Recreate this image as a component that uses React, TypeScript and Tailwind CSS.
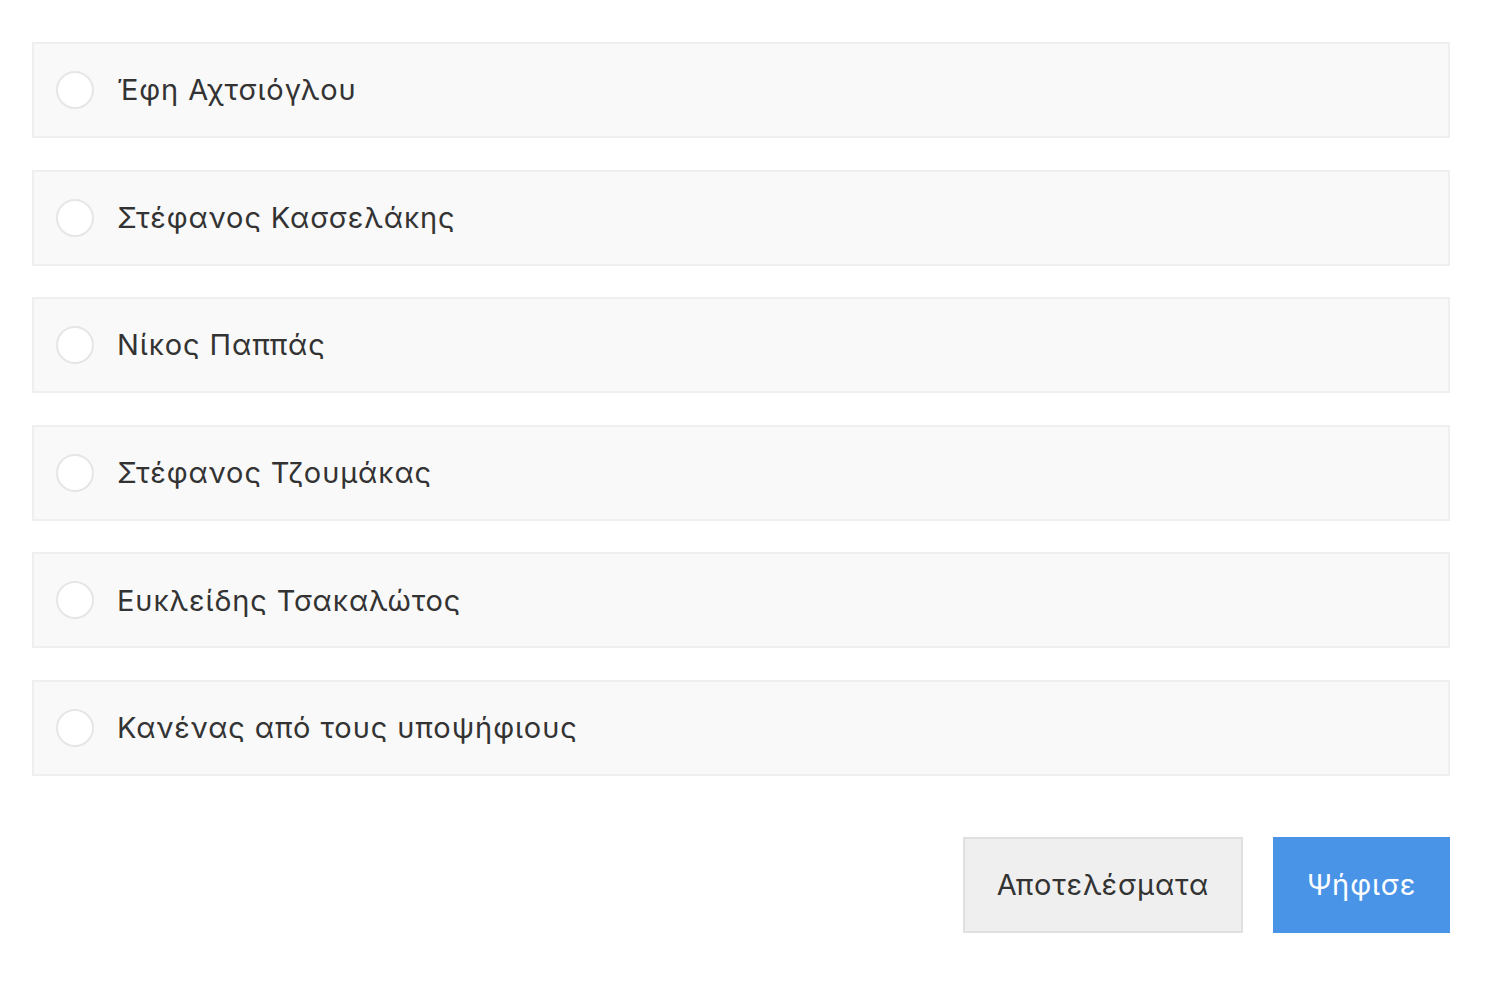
import { useState } from "react";

const candidates = [
  "Έφη Αχτσιόγλου",
  "Στέφανος Κασσελάκης",
  "Νίκος Παππάς",
  "Στέφανος Τζουμάκας",
  "Ευκλείδης Τσακαλώτος",
  "Κανένας από τους υποψήφιους",
];

export default function App() {
  const [selected, setSelected] = useState<number | null>(null);

  return (
    <div className="min-h-screen bg-white font-['Inter',sans-serif] text-[#333]">
      <div className="ml-[32px] w-[1418px] pt-[42px]">
        <div className="flex flex-col gap-[31.6px]">
          {candidates.map((name, i) => (
            <label
              key={name}
              className="flex h-[96px] cursor-pointer items-center border-2 border-[#efefef] bg-[#f9f9f9] pl-[22px]"
              onClick={() => setSelected(i)}
            >
              <span className="flex h-[38px] w-[38px] items-center justify-center rounded-full border-2 border-[#e6e6e6] bg-white">
                {selected === i && <span className="h-[16px] w-[16px] rounded-full bg-[#4a94e8]" />}
              </span>
              <span className="ml-[23px] text-[29px] tracking-[0.9px]">{name}</span>
            </label>
          ))}
        </div>
        <div className="mt-[61px] flex justify-end gap-[30px]">
          <button
            type="button"
            className="h-[96px] w-[280px] border-2 border-[#e0e0e0] bg-[#efefef] text-[29px] tracking-[0.9px] text-[#333]"
          >
            Αποτελέσματα
          </button>
          <button
            type="button"
            className="h-[96px] w-[177px] border-2 border-[#4a94e8] bg-[#4a94e8] text-[29px] tracking-[0.9px] text-white"
          >
            Ψήφισε
          </button>
        </div>
      </div>
    </div>
  );
}
